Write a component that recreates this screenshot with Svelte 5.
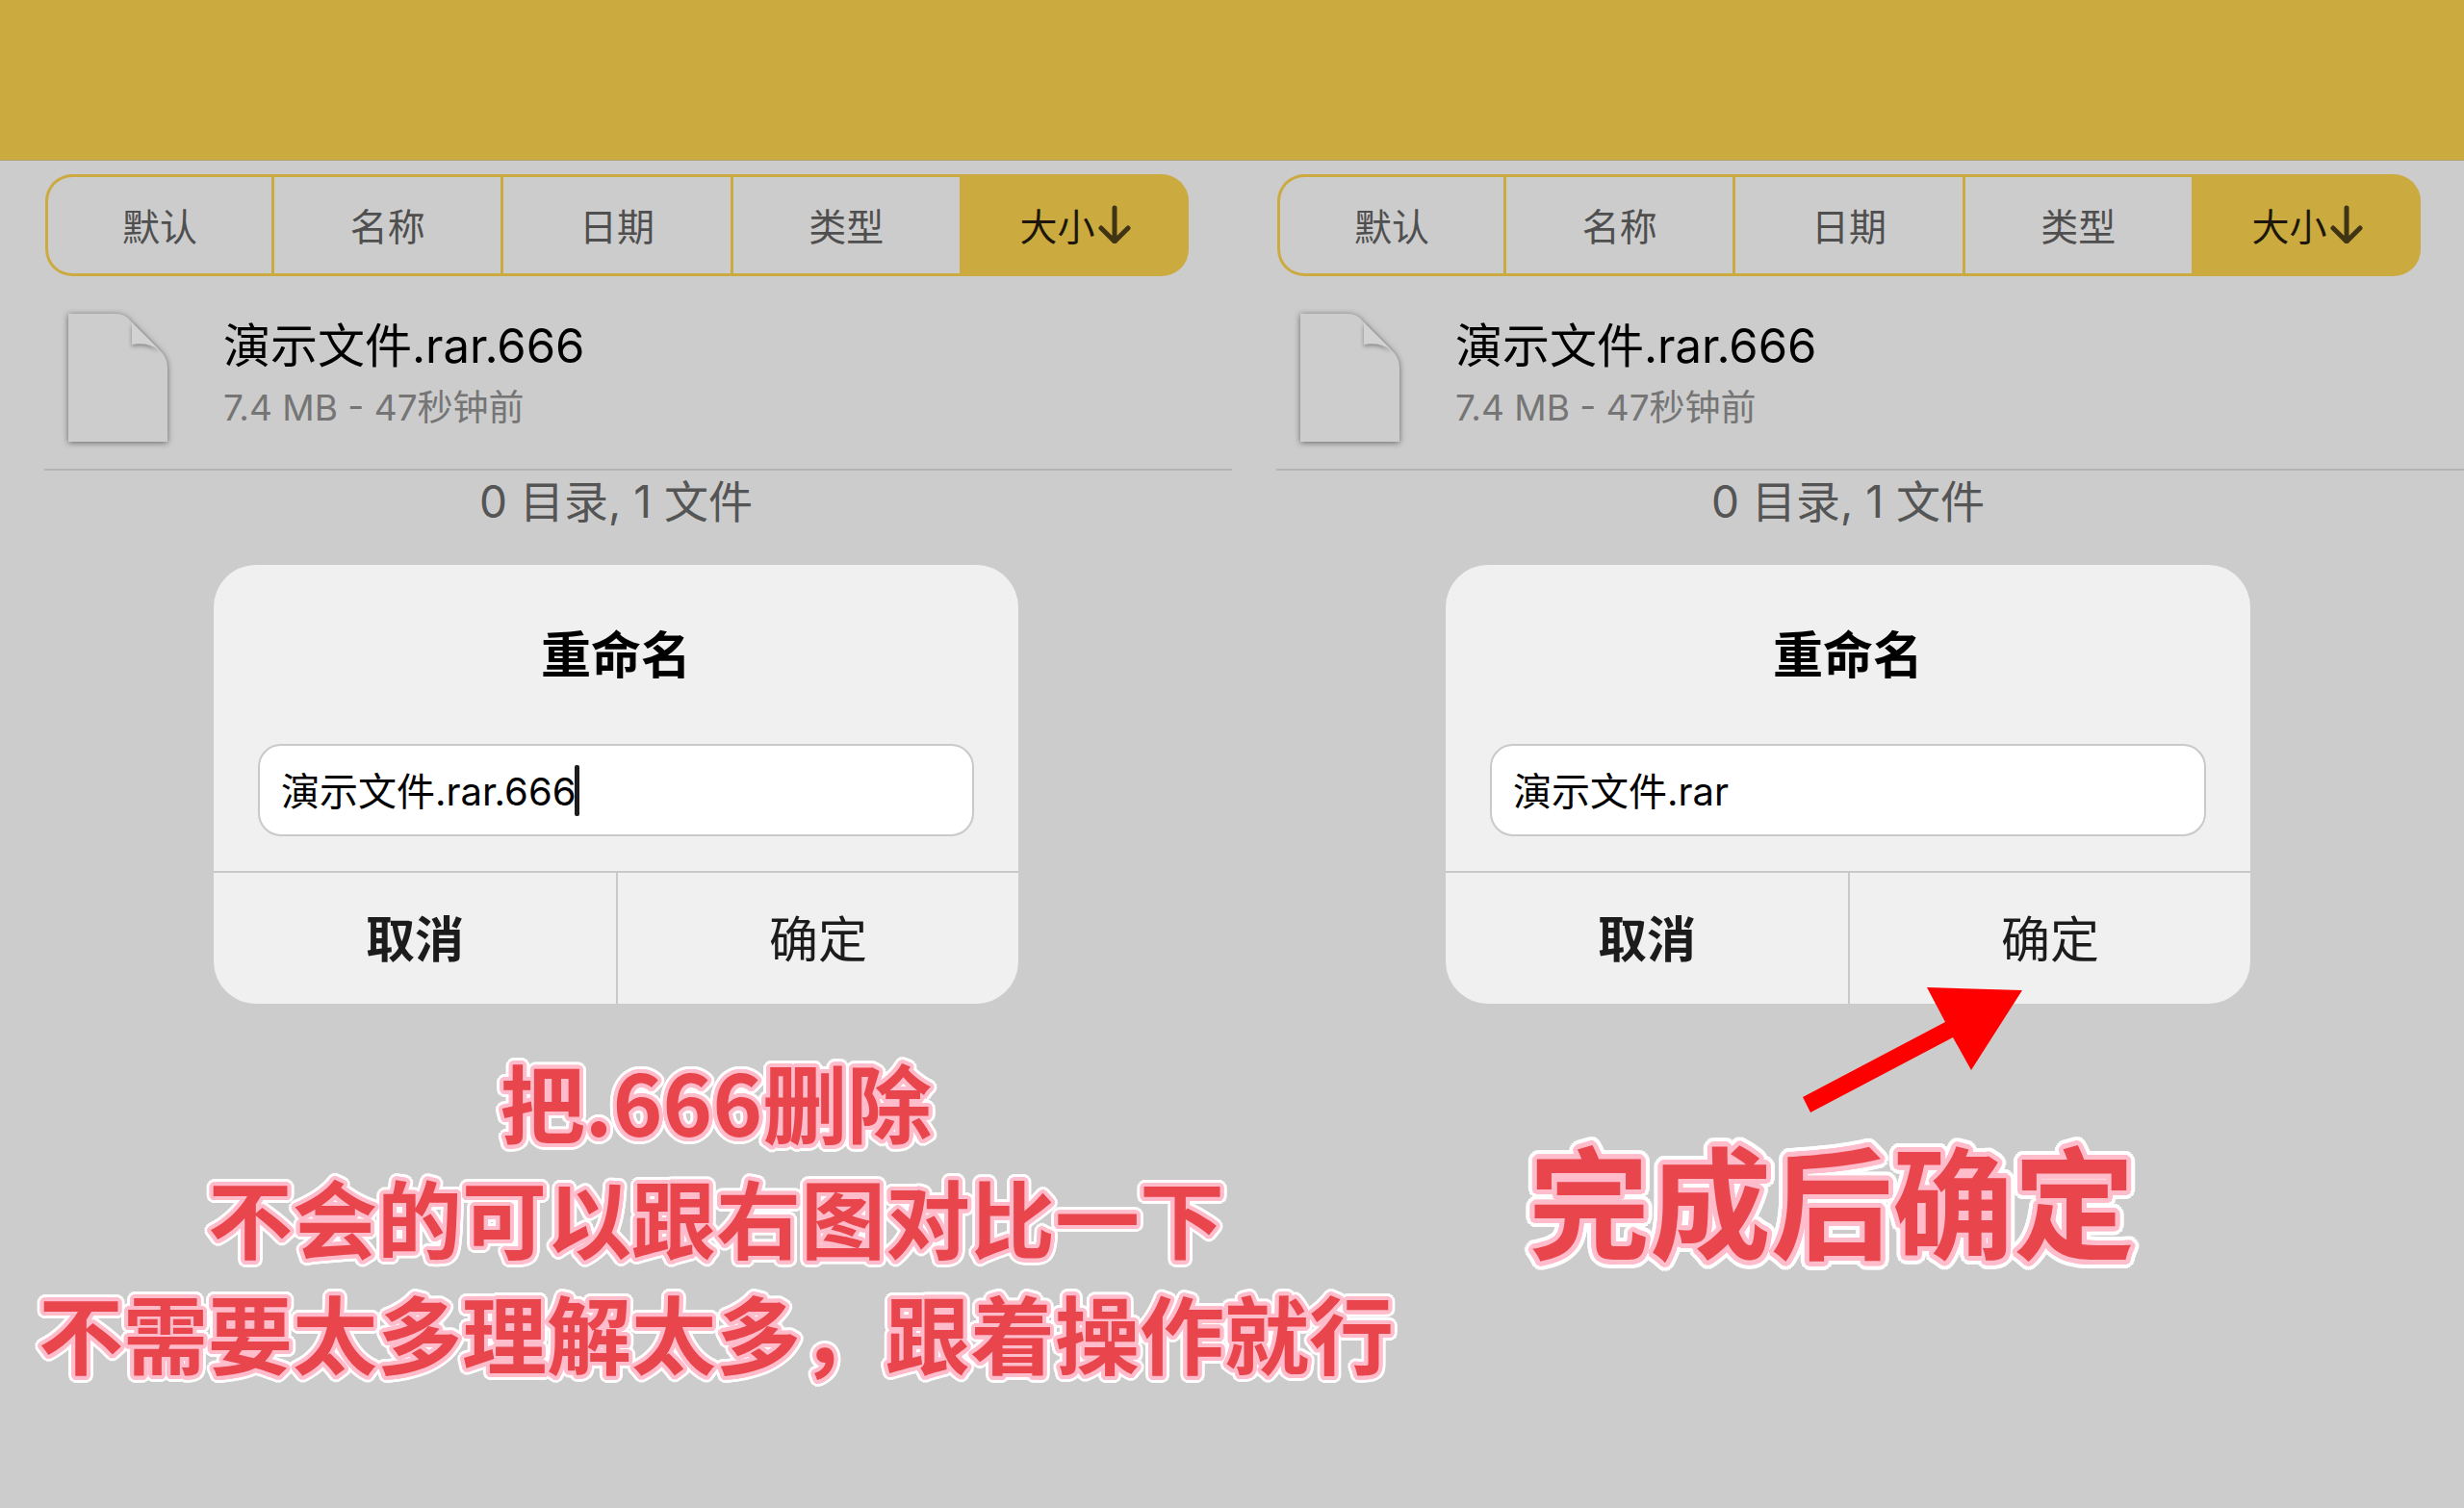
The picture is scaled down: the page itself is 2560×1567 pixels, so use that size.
<script lang="ts">
	interface Panel {
		id: string;
		fileName: string;
		editing: boolean;
		arrow: boolean;
	}

	const sorts = ['默认', '名称', '日期', '类型', '大小'];
	const captions = [
		{ big: false, rim: 4, lines: ['把.666删除', '不会的可以跟右图对比一下', '不需要太多理解太多，跟着操作就行'] },
		{ big: true, rim: 5, lines: ['完成后确定'] }
	];

	let panels = $state<Panel[]>([
		{ id: 'before', fileName: '演示文件.rar.666', editing: true, arrow: false },
		{ id: 'after', fileName: '演示文件.rar', editing: false, arrow: true }
	]);
	let active = $state('大小');

	// A ring of hard shadows gives the letters a rim with round corners.
	function ring(radius: number, color: string) {
		const steps = 24;
		return Array.from({ length: steps }, (_, i) => {
			const a = (i / steps) * Math.PI * 2;
			return `${(Math.cos(a) * radius).toFixed(1)}px ${(Math.sin(a) * radius).toFixed(1)}px 0 ${color}`;
		}).join(', ');
	}

	function outline(rim: number) {
		return `${ring(rim, '#ffbccb')}, ${ring(rim * 2 - 1, '#fff')}`;
	}
</script>

<header class="topbar"></header>

<main>
	<div class="panels">
		{#each panels as panel (panel.id)}
			<section class="panel">
				<nav class="sorts">
					{#each sorts as sort (sort)}
						<button class="sort" class:active={sort === active} onclick={() => (active = sort)}>
							{sort}
							{#if sort === active}
								<svg width="38" height="40" viewBox="0 0 38 40" aria-hidden="true">
									<path d="M21 3V37M7 24L21 38L35 24" />
								</svg>
							{/if}
						</button>
					{/each}
				</nav>

				<div class="file">
					<svg class="doc" width="120" height="150" viewBox="0 0 120 150" aria-hidden="true">
						<path class="sheet" d="M9 9H58C66 9 70 12 75 18L103 46C109 52 112 57 112 66V142H9Z" />
						<path class="fold" d="M75 18V41Q90 38 103 46Z" />
					</svg>
					<div class="info">
						<div class="name">演示文件.rar.666</div>
						<div class="meta">7.4 MB - 47秒钟前</div>
					</div>
				</div>

				<p class="summary">0 目录, 1 文件</p>

				<div class="dialog" role="dialog" aria-labelledby="title-{panel.id}">
					<h2 id="title-{panel.id}">重命名</h2>
					<div class="field">
						<input type="text" aria-labelledby="title-{panel.id}" bind:value={panel.fileName} />
						{#if panel.editing}<span class="caret"></span>{/if}
					</div>
					<div class="actions">
						<button class="cancel">取消</button>
						<button>确定</button>
					</div>
					{#if panel.arrow}
						<svg class="pointer" width="228" height="130" viewBox="0 0 228 130" aria-hidden="true">
							<path d="M228 3L129 0L148 36L0 114L8 130L156 52L175 86Z" />
						</svg>
					{/if}
				</div>
			</section>
		{/each}
	</div>

	<div class="captions">
		{#each captions as caption}
			<div class="caption" class:big={caption.big} style:text-shadow={outline(caption.rim)}>
				{#each caption.lines as line}
					<p>{line}</p>
				{/each}
			</div>
		{/each}
	</div>
</main>

<style>
	:global(body) {
		background: #cccccc;
		font-family: Inter, 'Noto Sans CJK SC', sans-serif;
		overflow-x: hidden;
	}
	button,
	input {
		font: inherit;
		color: inherit;
		border: none;
		background: none;
		padding: 0;
	}
	button {
		cursor: pointer;
	}
	.topbar {
		height: 166px;
		background: #cbaa40;
		border-bottom: 1px solid #b3a06a;
	}
	.panels {
		display: grid;
		grid-template-columns: 1fr 1fr;
	}
	.sorts {
		display: grid;
		grid-template-columns: 235fr repeat(4, 238fr);
		height: 106px;
		margin: 14px 45px 0 47px;
	}
	.sort {
		display: flex;
		align-items: center;
		justify-content: center;
		padding-bottom: 2px;
		border: 3px solid #cbaa40;
		border-right: none;
		font-size: 39px;
		color: #4f4f4f;
	}
	.sort:first-child {
		border-radius: 28px 0 0 28px;
	}
	.sort:last-child {
		border-radius: 0 28px 28px 0;
	}
	.sort.active {
		background: #cbaa40;
		color: #1c170a;
	}
	.sort svg {
		fill: none;
		stroke: #3f3414;
		stroke-width: 5;
		stroke-linecap: round;
		stroke-linejoin: round;
	}
	.file {
		display: flex;
		align-items: center;
		gap: 50px;
		height: 202px;
		margin-left: 46px;
		padding-left: 16px;
		border-bottom: 2px solid #b4b4b4;
		box-sizing: border-box;
	}
	.doc {
		flex: none;
		margin-top: 10px;
	}
	.sheet {
		fill: #cdcdcd;
		filter: drop-shadow(0 1px 3px rgba(0, 0, 0, 0.5));
	}
	.fold {
		fill: #d2d2d2;
		filter: drop-shadow(0 2px 2px rgba(0, 0, 0, 0.35));
	}
	.info {
		padding-top: 6px;
	}
	.name {
		font-size: 49px;
		line-height: 68px;
		color: #000;
	}
	.meta {
		font-size: 37px;
		line-height: 60px;
		color: #757575;
	}
	.summary {
		margin: 0;
		padding: 2px 0;
		font-size: 46px;
		line-height: 60px;
		text-align: center;
		color: #555;
	}
	.dialog {
		position: relative;
		width: 836px;
		max-width: 90%;
		margin: 34px auto 0;
		border-radius: 44px;
		background: #f0f0f0;
	}
	h2 {
		margin: 0;
		padding: 58px 0 54px;
		font-size: 52px;
		line-height: 74px;
		text-align: center;
		color: #000;
	}
	.field {
		display: flex;
		align-items: center;
		height: 92px;
		margin: 0 46px;
		padding: 0 22px;
		border: 2px solid #c9c9c9;
		border-radius: 24px;
		background: #fff;
	}
	.field input {
		field-sizing: content;
		min-width: 40px;
		padding-top: 4px;
		font-size: 40px;
		line-height: 60px;
		color: #000;
		outline: none;
	}
	.caret {
		width: 5px;
		height: 53px;
		margin-left: -2px;
		border-radius: 2px;
		background: #1c1c1e;
	}
	.actions {
		display: grid;
		grid-template-columns: 1fr 1fr;
		margin-top: 36px;
		border-top: 2px solid #c9c9c9;
	}
	.actions button {
		height: 136px;
		padding-bottom: 4px;
		font-size: 51px;
		color: #1c1c1c;
	}
	.actions button + button {
		border-left: 2px solid #c9c9c9;
	}
	.actions .cancel {
		font-weight: 700;
	}
	.pointer {
		position: absolute;
		left: 371px;
		top: 439px;
		fill: #fe0000;
	}
	.captions {
		display: flex;
		gap: 140px;
		padding: 40px;
	}
	.caption {
		font-family: 'Noto Sans CJK SC', sans-serif;
		font-size: 88px;
		font-weight: 700;
		line-height: 120px;
		text-align: center;
		white-space: nowrap;
		color: #e9454c;
	}
	.caption.big {
		padding-top: 66px;
		font-size: 126px;
		line-height: 190px;
	}
	.caption p {
		margin: 0;
	}
</style>
